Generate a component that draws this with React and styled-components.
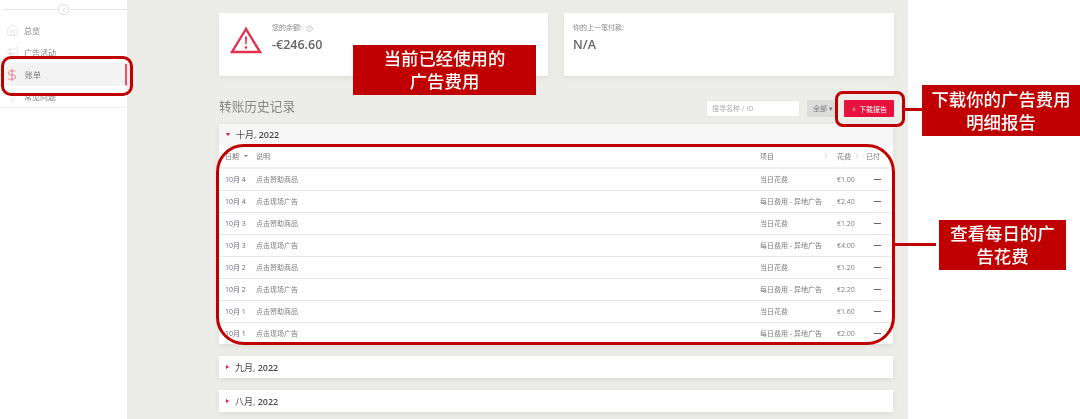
import React from 'react';
import styled, { createGlobalStyle } from 'styled-components';
import { Home, Megaphone, DollarSign, Lightbulb, ChevronLeft, CircleHelp, ArrowDown } from 'lucide-react';

const FONT = `"Open Sans", "Noto Sans CJK SC", sans-serif`;

const GlobalStyle = createGlobalStyle`
  html, body { margin: 0; padding: 0; background: #fff; }
  * { box-sizing: border-box; }
`;

// The reference is a soft, upscaled capture, so the whole page gets a slight blur
const Page = styled.div`
  position: relative;
  width: 1080px;
  height: 419px;
  overflow: hidden;
  display: grid;
  grid-template-columns: 127px 781px 172px;
  font-family: ${FONT};
  background: #fff;
  filter: blur(0.35px);
`;

// Left navigation
const Sidebar = styled.aside`
  background: #fff;
  padding-top: 9px;
  box-shadow: 1px 0 2px rgba(0, 0, 0, 0.04);
`;

const CollapseRow = styled.div`
  position: relative;
  height: 11px;
  margin-left: 2px;
  border-top: 1px solid #e4e4e4;
`;

const CollapseButton = styled.span`
  position: absolute;
  left: 56px;
  top: -6px;
  width: 11px;
  height: 11px;
  border-radius: 50%;
  border: 1px solid #ddd;
  background: #fff;
  color: #bbb;
  display: flex;
  align-items: center;
  justify-content: center;
`;

const NavList = styled.nav`
  display: flex;
  flex-direction: column;
`;

const NavItem = styled.div`
  height: 22px;
  display: flex;
  align-items: center;
  gap: ${(p) => (p.$active ? '6px' : '5px')};
  padding-left: ${(p) => (p.$active ? '5px' : '6px')};
  font-size: 8px;
  color: #808080;
  background: ${(p) => (p.$active ? '#f3f3f3' : '#fff')};
  border-right: ${(p) => (p.$active ? '2px solid #e8506c' : '2px solid transparent')};
  border-bottom: 1px solid ${(p) => (p.$divider ? '#efefef' : 'transparent')};
  svg {
    flex: none;
    color: ${(p) => (p.$active ? '#f0506e' : '#d0d0d0')};
  }
`;

// Main column
const Main = styled.main`
  background: #ecece8;
  padding: 13px 15px 0 92px;
`;

const SummaryRow = styled.section`
  display: grid;
  grid-template-columns: 329px 330px;
  gap: 16px;
`;

const SummaryCard = styled.div`
  height: 63px;
  background: #fff;
  box-shadow: 0 2px 5px rgba(0, 0, 0, 0.06);
  padding: ${(p) => (p.$icon ? '10px 0 0 11px' : '10px 0 0 9px')};
  display: flex;
  gap: 10px;
`;

const WarningIcon = styled.svg`
  flex: none;
  width: 32px;
  height: 27px;
  margin-top: 4px;
`;

const SummaryLabel = styled.div`
  display: flex;
  align-items: center;
  gap: 4px;
  font-size: 7px;
  line-height: 10px;
  color: #888;
  svg { color: #999; }
`;

const SummaryValue = styled.div`
  font-size: 12.5px;
  font-weight: 600;
  line-height: 17px;
  margin-top: 3px;
  color: #666;
`;

const Toolbar = styled.div`
  height: 48px;
  width: 675px;
  display: flex;
  align-items: flex-start;
  padding-top: 24px;
`;

const PageTitle = styled.h2`
  margin: -3px auto 0 0;
  font-size: 12.7px;
  line-height: 18px;
  font-weight: 400;
  color: #888;
`;

const SearchBox = styled.div`
  width: 94px;
  height: 17px;
  background: #fff;
  border: 1px solid #e8e8e8;
  font-size: 7px;
  line-height: 15px;
  padding-left: 5px;
  color: #aaa;
`;

const FilterButton = styled.div`
  width: 28px;
  height: 17px;
  margin-left: 7px;
  background: #dcdcdc;
  font-size: 7px;
  line-height: 17px;
  padding-left: 6px;
  color: #777;
`;

const DownloadButton = styled.button`
  width: 50px;
  height: 17px;
  margin-left: 9px;
  border: none;
  border-radius: 1px;
  padding: 0;
  background: #e8103c;
  color: #fff;
  font-family: ${FONT};
  font-size: 7px;
  display: flex;
  align-items: center;
  justify-content: center;
  gap: 2px;
`;

const Month = styled.section`
  background: #fff;
  margin-bottom: 12px;
  box-shadow: 0 2px 6px rgba(0, 0, 0, 0.07);
`;

const MonthHeader = styled.div`
  height: ${(p) => (p.$open ? '21px' : '22px')};
  background: ${(p) => (p.$open ? '#f6f6f6' : '#fff')};
  display: flex;
  align-items: center;
  padding-left: 7px;
  gap: 6px;
  font-size: 9px;
  color: #4a4a4a;
`;

const MonthYear = styled.span`
  font-weight: 600;
`;

const Caret = styled.span`
  width: 0;
  height: 0;
  border-style: solid;
  ${(p) =>
    p.$open
      ? 'border-width: 3px 2.5px 0 2.5px; border-color: #e8103c transparent transparent transparent;'
      : 'border-width: 2.5px 0 2.5px 3px; border-color: transparent transparent transparent #e8103c;'}
`;

const Row = styled.div`
  display: grid;
  grid-template-columns: 37px 504px 77px 29px 27px;
  align-items: center;
  height: ${(p) => (p.$head ? '24px' : '22px')};
  padding-bottom: 1px;
  font-size: 7px;
  color: #7c7c7c;
  border-bottom: ${(p) => (p.$head ? '2px solid #eeeeee' : '1px solid #e8e8e8')};
  &:last-child { border-bottom: none; height: 21px; }
`;

const Cell = styled.div`
  display: flex;
  align-items: center;
  justify-content: space-between;
  white-space: nowrap;
  padding-left: ${(p) => (p.$first ? '6px' : '0')};
`;

const DateText = styled.span`
  color: #6d6480;
`;

// Up/down sort arrows in a column head
const SortMark = styled.span`
  display: flex;
  flex-direction: column;
  gap: 1px;
  margin-right: ${(p) => p.$gap}px;
  &::before, &::after {
    content: '';
    width: 0;
    height: 0;
    border-left: 1.5px solid transparent;
    border-right: 1.5px solid transparent;
  }
  &::before { border-bottom: 2px solid #cfcfcf; }
  &::after { border-top: 2px solid #cfcfcf; }
`;

const SortActive = styled.span`
  width: 0;
  height: 0;
  margin-right: 8px;
  border-left: 2px solid transparent;
  border-right: 2px solid transparent;
  border-top: 2px solid #777;
`;

const Dash = styled.span`
  width: 7px;
  height: 1px;
  margin-left: 8px;
  background: #666;
`;

// Red annotations drawn over the screenshot
const Callout = styled.div`
  position: absolute;
  left: ${(p) => p.$x}px;
  top: ${(p) => p.$y}px;
  width: ${(p) => p.$w}px;
  height: ${(p) => p.$h}px;
  background: #c00000;
  color: #fff;
  font-size: 17.4px;
  font-weight: 500;
  line-height: 23px;
  text-align: center;
  display: flex;
  align-items: center;
  justify-content: center;
`;

const Ring = styled.div`
  position: absolute;
  left: ${(p) => p.$x}px;
  top: ${(p) => p.$y}px;
  width: ${(p) => p.$w}px;
  height: ${(p) => p.$h}px;
  border: 3px solid #c00000;
  border-radius: ${(p) => p.$r}px;
`;

const Connector = styled.div`
  position: absolute;
  left: ${(p) => p.$x}px;
  top: ${(p) => p.$y}px;
  width: ${(p) => p.$w}px;
  height: 3px;
  background: #c00000;
`;

const rows = [
  ['10月 4', '点击赞助商品', '当日花费', '€1.00'],
  ['10月 4', '点击现场广告', '每日费用 - 异地广告', '€2.40'],
  ['10月 3', '点击赞助商品', '当日花费', '€1.20'],
  ['10月 3', '点击现场广告', '每日费用 - 异地广告', '€4.00'],
  ['10月 2', '点击赞助商品', '当日花费', '€1.20'],
  ['10月 2', '点击现场广告', '每日费用 - 异地广告', '€2.20'],
  ['10月 1', '点击赞助商品', '当日花费', '€1.60'],
  ['10月 1', '点击现场广告', '每日费用 - 异地广告', '€2.00'],
];

export default function App() {
  return (
    <Page>
      <GlobalStyle />
      <Sidebar>
        <CollapseRow>
          <CollapseButton><ChevronLeft size={8} strokeWidth={1.5} /></CollapseButton>
        </CollapseRow>
        <NavList>
          <NavItem><Home size={13} strokeWidth={1} />总览</NavItem>
          <NavItem $divider><Megaphone size={13} strokeWidth={1} />广告活动</NavItem>
          <NavItem $active><DollarSign size={14} strokeWidth={1.2} />账单</NavItem>
          <NavItem $divider><Lightbulb size={13} strokeWidth={1} />常见问题</NavItem>
        </NavList>
      </Sidebar>

      <Main>
        <SummaryRow>
          <SummaryCard $icon>
            <WarningIcon viewBox="0 0 32 27">
              <path d="M16 2 L2 25 H30 Z" fill="none" stroke="#e2324f" strokeWidth="2.4" />
              <path d="M15 9.5 H17 L16.6 17.5 H15.4 Z" fill="#e2324f" />
              <circle cx="16" cy="20.5" r="1.3" fill="#e2324f" />
            </WarningIcon>
            <div>
              <SummaryLabel>您的余额: <CircleHelp size={7} strokeWidth={1.5} /></SummaryLabel>
              <SummaryValue>-€246.60</SummaryValue>
            </div>
          </SummaryCard>
          <SummaryCard>
            <div>
              <SummaryLabel>你的上一笔付款:</SummaryLabel>
              <SummaryValue>N/A</SummaryValue>
            </div>
          </SummaryCard>
        </SummaryRow>

        <Toolbar>
          <PageTitle>转账历史记录</PageTitle>
          <SearchBox>搜寻名称 / ID</SearchBox>
          <FilterButton>全部 ▾</FilterButton>
          <DownloadButton><ArrowDown size={6} strokeWidth={2} />下载报告</DownloadButton>
        </Toolbar>

        <Month>
          <MonthHeader $open><Caret $open /><span>十月, <MonthYear>2022</MonthYear></span></MonthHeader>
          <Row $head>
            <Cell $first>日期<SortActive /></Cell>
            <Cell>说明</Cell>
            <Cell>项目<SortMark $gap={10} /></Cell>
            <Cell>花费<SortMark $gap={8} /></Cell>
            <Cell>已付<SortMark $gap={3} /></Cell>
          </Row>
          {rows.map(([date, desc, item, cost], i) => (
            <Row key={i}>
              <Cell $first><DateText>{date}</DateText></Cell>
              <Cell>{desc}</Cell>
              <Cell>{item}</Cell>
              <Cell>{cost}</Cell>
              <Cell><Dash /></Cell>
            </Row>
          ))}
        </Month>
        <Month>
          <MonthHeader><Caret /><span>九月, <MonthYear>2022</MonthYear></span></MonthHeader>
        </Month>
        <Month>
          <MonthHeader><Caret /><span>八月, <MonthYear>2022</MonthYear></span></MonthHeader>
        </Month>
      </Main>
      <div />

      <Ring $x={1} $y={56} $w={132} $h={40} $r={10} />
      <Ring $x={835} $y={91} $w={70} $h={36} $r={8} />
      <Ring $x={216} $y={144} $w={679} $h={201} $r={28} />
      <Connector $x={904} $y={108} $w={18} />
      <Connector $x={895} $y={243} $w={41} />
      <Callout $x={353} $y={45} $w={183} $h={50}>当前已经使用的<br />广告费用</Callout>
      <Callout $x={922} $y={85} $w={158} $h={51}>下载你的广告费用<br />明细报告</Callout>
      <Callout $x={939} $y={220} $w={127} $h={50}>查看每日的广<br />告花费</Callout>
    </Page>
  );
}
